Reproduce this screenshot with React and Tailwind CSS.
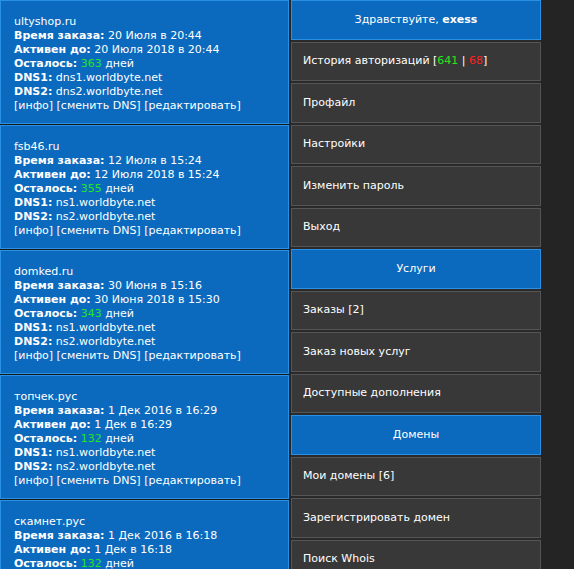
import React from "react";

const orders = [
  { domain: "ultyshop.ru", ordered: "20 Июля в 20:44", active: "20 Июля 2018 в 20:44", left: 363, dns1: "dns1.worldbyte.net", dns2: "dns2.worldbyte.net" },
  { domain: "fsb46.ru", ordered: "12 Июля в 15:24", active: "12 Июля 2018 в 15:24", left: 355, dns1: "ns1.worldbyte.net", dns2: "ns2.worldbyte.net" },
  { domain: "domked.ru", ordered: "30 Июня в 15:16", active: "30 Июня 2018 в 15:30", left: 343, dns1: "ns1.worldbyte.net", dns2: "ns2.worldbyte.net" },
  { domain: "топчек.рус", ordered: "1 Дек 2016 в 16:29", active: "1 Дек в 16:29", left: 132, dns1: "ns1.worldbyte.net", dns2: "ns2.worldbyte.net" },
  { domain: "скамнет.рус", ordered: "1 Дек 2016 в 16:18", active: "1 Дек в 16:18", left: 132, dns1: "ns1.worldbyte.net", dns2: "ns2.worldbyte.net" },
];

function OrderCard({ o }) {
  return (
    <div className="h-[124px] shrink-0 border border-[#2a90e4] bg-[#0b6abd] px-[13px] pt-[14px] text-[11px] leading-[14px] text-white">
      <div>{o.domain}</div>
      <div><b>Время заказа:</b> {o.ordered}</div>
      <div><b>Активен до:</b> {o.active}</div>
      <div><b>Осталось:</b> <span className="text-[#22e622]">{o.left}</span> дней</div>
      <div><b>DNS1:</b> {o.dns1}</div>
      <div><b>DNS2:</b> {o.dns2}</div>
      <div>[инфо] [сменить DNS] [редактировать]</div>
    </div>
  );
}

function MenuItem({ children, head }) {
  if (head) {
    return (
      <div className="flex h-[39.5px] shrink-0 items-center justify-center border border-[#2a90e4] bg-[#0b6abd] text-[11px] text-white">
        {children}
      </div>
    );
  }
  return (
    <div className="flex h-[39.5px] shrink-0 items-center border border-[#555555] bg-[#383838] pl-[11px] text-[11px] text-white">
      {children}
    </div>
  );
}

export default function App() {
  return (
    <div
      className="flex h-[569px] w-[574px] overflow-hidden bg-[#262626]"
      style={{ fontFamily: "Tahoma, 'DejaVu Sans', sans-serif" }}
    >
      <div className="flex w-[289px] shrink-0 flex-col gap-[1px] bg-[#1a1a1a]">
        {orders.map((o) => (
          <OrderCard key={o.domain} o={o} />
        ))}
      </div>
      <div className="ml-[2px] flex w-[250px] shrink-0 flex-col gap-[2px] bg-[#2a2a2a]">
        <MenuItem head>
          Здравствуйте,&nbsp;<b>exess</b>
        </MenuItem>
        <MenuItem>
          История авторизаций [<span className="text-[#22e622]">641</span>&nbsp;|&nbsp;<span className="text-[#ff2020]">68</span>]
        </MenuItem>
        <MenuItem>Профайл</MenuItem>
        <MenuItem>Настройки</MenuItem>
        <MenuItem>Изменить пароль</MenuItem>
        <MenuItem>Выход</MenuItem>
        <MenuItem head>Услуги</MenuItem>
        <MenuItem>Заказы [2]</MenuItem>
        <MenuItem>Заказ новых услуг</MenuItem>
        <MenuItem>Доступные дополнения</MenuItem>
        <MenuItem head>Домены</MenuItem>
        <MenuItem>Мои домены [6]</MenuItem>
        <MenuItem>Зарегистрировать домен</MenuItem>
        <MenuItem>Поиск Whois</MenuItem>
      </div>
      <div className="flex-1 bg-[#242424]" />
    </div>
  );
}
